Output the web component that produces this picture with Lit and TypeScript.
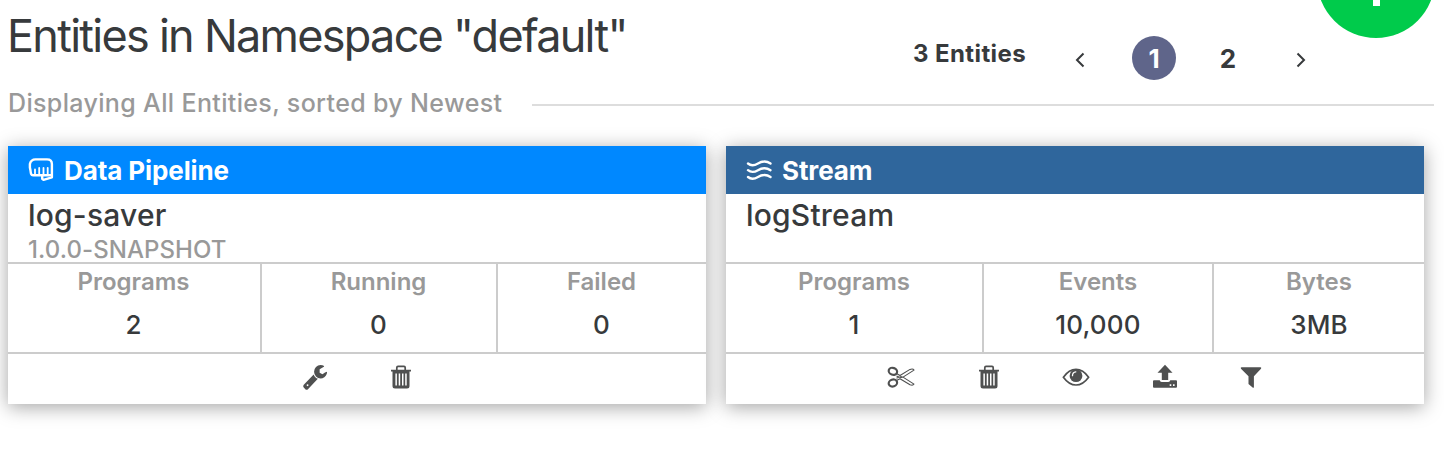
import { LitElement, html, css, svg } from "lit";
import { customElement, property } from "lit/decorators.js";

const icons: Record<string, unknown> = {
  fist: svg`<svg width="26" height="26" viewBox="0 0 26 26" fill="none" stroke="#fff" stroke-width="2.400" stroke-linejoin="round" stroke-linecap="round">
    <path d="M14 18.300H5C3 18.300 2.800 16.500 2.500 13.500L1.900 10.500V7C2.500 4.500 4.500 2.400 7.500 2.400H19C22 2.400 23.900 4 23.900 7V20.300L15.500 22.900L14.200 21.800V18.300H23.500"/>
    <path stroke-width="1.800" d="M7 17.500V12.500M11.200 17.500V11M15.500 17.500V11M19.700 17.500V10.800"/></svg>`,
  stream: svg`<svg width="26" height="22" viewBox="0 0 26 22" fill="none" stroke="#fff" stroke-width="2.400" stroke-linecap="round">
    <path d="M2 4.500C5 7 8.500 6.500 12 4.500S20 1.500 24.500 4.500M2 11.200C5 13.700 8.500 13.200 12 11.200S20 8.200 24.500 11.200M2 18C5 20.500 8.500 20 12 18S20 15 24.500 18"/></svg>`,
  wrench: svg`<svg width="26" height="27" viewBox="0 0 1792 1792" preserveAspectRatio="none"><path d="M448 1472q0-26-19-45t-45-19-45 19-19 45 19 45 45 19 45-19 19-45zm644-420l-682 682q-37 37-90 37-52 0-91-37l-106-108q-38-36-38-90 0-53 38-91l681-681q39 98 114.500 173.500t173.500 114.500zm634-435q0 39-23 106-47 134-164.500 217.500t-258.500 83.500q-185 0-316.500-131.500t-131.500-316.500 131.500-316.500 316.500-131.500q58 0 121.500 16.500t107.500 46.500q16 11 16 28t-16 28l-293 169v224l193 107q5-3 79-48.500t135.500-81 70.500-35.500q15 0 23.500 10t8.500 25z"/></svg>`,
  trash: svg`<svg width="28" height="28" viewBox="0 0 28 28"><path fill-rule="evenodd" d="M4 6.700H24V8.600H22.500V23Q22.500 25.500 20 25.500H8Q5.500 25.500 5.500 23V8.600H4ZM8.400 10.500V22.500H9.900V10.500ZM11.700 10.500V22.500H13.200V10.500ZM15 10.500V22.500H16.500V10.500ZM18.200 10.500V22.500H19.700V10.500Z"/><path d="M9.800 7V4.700Q9.800 3.400 11 3.400H17Q18.200 3.400 18.200 4.700V7" fill="none" stroke="#4f5050" stroke-width="1.700"/></svg>`,
  scissors: svg`<svg width="28" height="28" viewBox="0 0 28 28" fill="none" stroke="#4f5050">
    <ellipse cx="5.900" cy="8.300" rx="4.300" ry="3.400" transform="rotate(20 5.900 8.300)" stroke-width="2.200"/>
    <ellipse cx="5.900" cy="20" rx="4.300" ry="3.400" transform="rotate(-20 5.900 20)" stroke-width="2.200"/>
    <path stroke-width="1.100" stroke-linejoin="round" d="M9.500 10.600L13 12.500L23 6.400Q26 5.300 27 7.100L16 14.100L27 21.100Q26 22.900 23 21.800L13 15.700L9.500 17.600M9.500 13L12 14.100L9.500 15.200M12 14.100H16"/>
    <circle cx="14" cy="14.100" r=".6"/></svg>`,
  eye: svg`<svg width="28" height="28" viewBox="0 0 28 28"><path d="M1.400 14.200Q7 6.400 14 6.400T26.600 14.200Q21 22 14 22T1.400 14.200Z" fill="none" stroke="#4f5050" stroke-width="1.700"/><circle cx="14" cy="12.700" r="6.400"/><path d="M10.500 12.700Q10.500 9.200 13.800 8.900" fill="none" stroke="#fff" stroke-width="1.300" stroke-linecap="round"/></svg>`,
  upload: svg`<svg width="28" height="28" viewBox="0 0 28 28"><g transform="translate(1 0)"><path d="M14 1.700L21.500 9.800H17.200V17H10.800V9.800H6.500Z"/><path fill-rule="evenodd" d="M3 17.300H8.800V17.600Q9 19 10.700 19H17.300Q19 19 19.200 17.600V17.300H25Q26 17.300 26 18.300V23.700Q26 24.700 25 24.700H3Q2 24.700 2 23.700V18.300Q2 17.300 3 17.300ZM18.700 21.300V22.900H20.300V21.300ZM22 21.300V22.900H23.600V21.300Z"/></g></svg>`,
  filter: svg`<svg width="28" height="28" viewBox="0 0 28 28"><path d="M4.500 4.200H23.500Q24.800 4.600 24 5.800L16.900 13.200V24.300Q16.600 25.200 15.600 24.600L11.500 20.900V13.200L4 5.800Q3.200 4.600 4.500 4.200Z"/></svg>`,
};

interface Metric { label: string; value: string; }

@customElement("entity-card")
export class EntityCard extends LitElement {
  @property() kind = "";
  @property() icon = "";
  @property() name = "";
  @property() version = "";
  @property() variant = "";
  @property({ attribute: false }) metrics: Metric[] = [];
  @property({ attribute: false }) actions: string[] = [];

  static styles = css`
    :host { display: block; }
    .card { background: #fff; height: 258px; box-shadow: 0 3px 18px rgba(0,0,0,.36); color: #373a3c; display: flex; flex-direction: column; }
    .head { height: 48px; box-sizing: border-box; padding: 0 20px; display: flex; align-items: center; color: #fff; font-size: 26px; font-weight: 650; letter-spacing: -.1px; white-space: nowrap; }
    .pipeline .head { background: #0088ff; }
    .stream .head { background: #2f669c; }
    .glyph { width: 36px; display: flex; }
    .glyph svg { display: block; }
    .body { height: 68px; box-sizing: border-box; padding: 3px 20px 0; }
    .name { font-size: 30px; line-height: 36px; font-weight: 500; letter-spacing: .2px; }
    .version { font-size: 24px; line-height: 32px; margin-top: 1px; font-weight: 450; color: #999; letter-spacing: .08px; }
    .metrics { display: grid; height: 88px; border-top: 2px solid #ccc; border-bottom: 2px solid #ccc; text-align: center; }
    .pipeline .metrics { grid-template-columns: 254px 236px 208px; }
    .stream .metrics { grid-template-columns: 258px 230px 210px; }
    .metric { border-right: 2px solid #ccc; }
    .metric:last-child { border: 0; }
    .label { font-size: 24px; line-height: 36px; font-weight: 600; color: #999; letter-spacing: 0; }
    .pipeline .label, .pipeline .value { position: relative; left: -.5px; }
    .value { font-size: 26px; line-height: 30px; margin-top: 10px; font-weight: 500; letter-spacing: .2px; }
    .actions { height: 50px; display: flex; justify-content: center; gap: 59.500px; padding: 9px 0 0 2px; box-sizing: border-box; }
    .pipeline .actions { gap: 58px; }
    .action { width: 28px; height: 28px; display: flex; justify-content: center; }
    .action svg { fill: #4f5050; display: block; }
    .action svg[fill="none"] { fill: none; }
  `;

  render() {
    return html`<article class="card ${this.variant}">
      <header class="head"><span class="glyph">${icons[this.icon]}</span><span>${this.kind}</span></header>
      <div class="body"><div class="name">${this.name}</div><div class="version">${this.version}</div></div>
      <div class="metrics">${this.metrics.map((m) => html`<div class="metric"><div class="label">${m.label}</div><div class="value">${m.value}</div></div>`)}</div>
      <div class="actions">${this.actions.map((a) => html`<span class="action">${icons[a]}</span>`)}</div>
    </article>`;
  }
}

@customElement("app-root")
export class AppRoot extends LitElement {
  static styles = css`
    :host { display: block; position: relative; height: 452px; overflow: hidden; background: #fff; color: #373a3c; font-family: Inter, "Liberation Sans", sans-serif; }
    .top { display: flex; justify-content: space-between; height: 86px; padding-left: 8px; white-space: nowrap; }
    h1 { margin: 9px 0 0 -1px; font-size: 45px; line-height: 54px; font-weight: 400; letter-spacing: -1.730px; }
    .pager { display: flex; align-items: flex-start; padding: 36px 138px 0 0; }
    .count { font-size: 24px; line-height: 35px; font-weight: 700; letter-spacing: .4px; width: 114px; }
    .arrow { width: 10px; height: 16px; margin-top: 16px; }
    .prev { margin-left: 48px; }
    .page { width: 44px; height: 44px; line-height: 45px; text-align: center; border-radius: 50%; font-size: 26px; font-weight: 700; margin-left: 47px; }
    .current { background: #5f658a; color: #fff; }
    .page + .page { margin-left: 30px; }
    .next { margin-left: 46px; }
    .sub { display: flex; align-items: center; height: 34px; padding: 0 10px 0 8px; font-size: 25px; font-weight: 450; color: #999; white-space: nowrap; }
    .caption { width: 524px; letter-spacing: .35px; }
    .rule { height: 2px; background: #ddd; flex: 1; margin-top: 4px; }
    .cards { display: grid; grid-template-columns: 698px 698px; gap: 20px; padding: 26px 8px 0; }
    .add { position: absolute; left: 1317px; top: -80px; width: 118px; height: 118px; border-radius: 50%; background: #00cb4b; }
    .plus { position: absolute; left: 55.500px; top: 38px; width: 7px; height: 48px; background: #fff; }
  `;

  render() {
    return html`
      <div class="top">
        <h1>Entities in Namespace "default"</h1>
        <nav class="pager">
          <span class="count">3 Entities</span>
          <svg class="arrow prev" viewBox="0 0 10 16" fill="none" stroke="#373a3c" stroke-width="2"><path d="M8.500 1.500L2 8L8.500 14.500"/></svg>
          <span class="page current">1</span><span class="page">2</span>
          <svg class="arrow next" viewBox="0 0 10 16" fill="none" stroke="#373a3c" stroke-width="2"><path d="M1.500 1.500L8 8L1.500 14.500"/></svg>
        </nav>
      </div>
      <div class="sub"><span class="caption">Displaying All Entities, sorted by Newest</span><span class="rule"></span></div>
      <main class="cards">
        <entity-card variant="pipeline" icon="fist" kind="Data Pipeline" name="log-saver" version="1.0.0-SNAPSHOT"
          .metrics=${[{ label: "Programs", value: "2" }, { label: "Running", value: "0" }, { label: "Failed", value: "0" }]}
          .actions=${["wrench", "trash"]}></entity-card>
        <entity-card variant="stream" icon="stream" kind="Stream" name="logStream"
          .metrics=${[{ label: "Programs", value: "1" }, { label: "Events", value: "10,000" }, { label: "Bytes", value: "3MB" }]}
          .actions=${["scissors", "trash", "eye", "upload", "filter"]}></entity-card>
      </main>
      <div class="add"><span class="plus"></span></div>`;
  }
}
